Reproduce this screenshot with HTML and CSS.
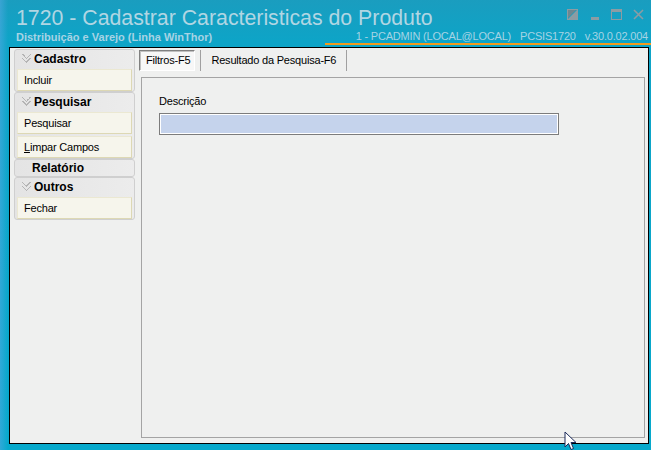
FILE: index.html
```html
<!DOCTYPE html>
<html lang="pt-BR">

<head>
  <meta charset="UTF-8">
  <title>1720 - Cadastrar Caracteristicas do Produto</title>
  <link rel="stylesheet" href="styles.css">
</head>

<body>
  <div class="desk">
    <div class="titlebar">
      <div class="title">1720 - Cadastrar Caracteristicas do Produto</div>
      <div class="controls">
        <svg width="11" height="11" viewBox="0 0 11 11"><rect x="0.5" y="0.5" width="10" height="10" fill="none" stroke="#8c9ca3"/><polygon points="0,11 11,0 11,11" fill="#8c9ca3"/><polygon points="1,1 9,1 1,9" fill="#6f8790"/></svg>
        <svg width="11" height="11" viewBox="0 0 11 11"><rect x="2" y="8" width="8" height="3" fill="#8c9ca3"/></svg>
        <svg width="11" height="11" viewBox="0 0 11 11"><rect x="0.5" y="0.5" width="10" height="10" fill="none" stroke="#8c9ca3"/><rect x="0" y="0" width="11" height="3" fill="#8c9ca3"/></svg>
        <svg width="11" height="11" viewBox="0 0 11 11"><path d="M1 1 L10 10 M10 1 L1 10" stroke="#8c9ca3" stroke-width="1.6"/></svg>
      </div>
    </div>
    <div class="subbar">
      <div class="subtitle">Distribuição e Varejo (Linha WinThor)</div>
      <div class="info">
        <span>1 - PCADMIN (LOCAL@LOCAL)</span>
        <span>PCSIS1720</span>
        <span>v.30.0.02.004</span>
      </div>
    </div>

    <div class="window">
      <div class="sidebar">
        <div class="group">
          <div class="group-head"><i class="chev"></i>Cadastro</div>
          <div class="item">Incluir</div>
        </div>
        <div class="group">
          <div class="group-head"><i class="chev"></i>Pesquisar</div>
          <div class="item">Pesquisar</div>
          <div class="item"><u>L</u>impar Campos</div>
        </div>
        <div class="group">
          <div class="group-head plain">Relatório</div>
        </div>
        <div class="group">
          <div class="group-head"><i class="chev"></i>Outros</div>
          <div class="item">Fechar</div>
        </div>
      </div>

      <div class="main">
        <div class="tabs">
          <div class="tab active">Filtros-F5</div>
          <div class="tab">Resultado da Pesquisa-F6</div>
        </div>
        <div class="panel">
          <div class="field-label">Descrição</div>
          <div class="field-input"></div>
        </div>
      </div>
    </div>
  </div>

  <svg class="cursor" width="14" height="20" viewBox="0 0 14 20">
    <path d="M1 1 L1 16 L4.5 12.5 L7 18.5 L9.5 17.5 L7 11.5 L12 11.5 Z" fill="#fff" stroke="#1a2a5a" stroke-width="1"/>
  </svg>
</body>

</html>
```

FILE: styles.css
```css
html,
body {
  margin: 0;
  width: 651px;
  height: 450px;
  overflow: hidden;
  font-family: "Liberation Sans", Arial, sans-serif;
  font-size: 11px;
  letter-spacing: -0.2px;
  color: #000;
}

.desk {
  width: 651px;
  height: 450px;
  background:
    linear-gradient(90deg, rgba(90, 170, 230, 0.5) 0, rgba(90, 170, 230, 0) 8px),
    linear-gradient(180deg, #1a9dbf 0, #0ea4c7 40px, #06a9cc 100%);
}

.titlebar {
  height: 31px;
  display: flex;
  justify-content: space-between;
}

.title {
  padding: 7px 0 0 16px;
  font-size: 21.3px;
  line-height: 22px;
  letter-spacing: 0;
  color: #b1d6e3;
}

.controls {
  display: flex;
  gap: 11px;
  padding: 9px 7px 0 0;
}

.subbar {
  height: 14px;
  display: flex;
  justify-content: space-between;
  align-items: flex-end;
}

.subtitle {
  padding-left: 16px;
  font-weight: bold;
  font-size: 11px;
  line-height: 13px;
  letter-spacing: 0;
  color: #a6d3e4;
  align-self: flex-start;
}

.info {
  width: 326px;
  height: 14px;
  display: flex;
  justify-content: flex-end;
  gap: 9px;
  padding-right: 3px;
  box-sizing: border-box;
  border-bottom: 2px solid #f39a1c;
  color: #a6d3e4;
  line-height: 11px;
  font-size: 11px;
}

.window {
  margin: 2px 0 0 9px;
  width: 640px;
  height: 397px;
  box-sizing: border-box;
  border: 1px solid #000;
  background: #eff0ef;
  display: flex;
  padding: 1px 3px 5px 4px;
}

.sidebar {
  width: 121px;
  flex-shrink: 0;
}

.group {
  border: 1px solid #cfcfcf;
  border-radius: 3px;
  background: linear-gradient(90deg, #e4e4e4, #ececec);
  padding: 0 2px;
}

.group-head {
  height: 17px;
  display: flex;
  align-items: center;
  font-weight: bold;
  font-size: 12px;
  letter-spacing: 0;
  padding-left: 5px;
}

.group-head.plain {
  height: 16px;
  padding-left: 15px;
}

.chev {
  width: 9px;
  height: 9px;
  margin-right: 3px;
  background:
    linear-gradient(45deg, transparent 45%, #b4b4b4 45%, #b4b4b4 60%, transparent 60%) 0 0 / 5px 5px no-repeat,
    linear-gradient(-45deg, transparent 45%, #b4b4b4 45%, #b4b4b4 60%, transparent 60%) 4px 0 / 5px 5px no-repeat,
    linear-gradient(45deg, transparent 45%, #b4b4b4 45%, #b4b4b4 60%, transparent 60%) 0 4px / 5px 5px no-repeat,
    linear-gradient(-45deg, transparent 45%, #b4b4b4 45%, #b4b4b4 60%, transparent 60%) 4px 4px / 5px 5px no-repeat;
}

.item {
  height: 22px;
  line-height: 21px;
  box-sizing: border-box;
  margin-top: 2px;
  padding-left: 6px;
  background: #f6f5ec;
  border: 1px solid #ddd8b4;
  border-left-color: #ebe8d2;
  border-top-color: #ebe8d2;
}

.main {
  flex: 1;
  display: flex;
  flex-direction: column;
  padding-left: 4px;
}

.tabs {
  height: 22px;
  display: flex;
  margin-bottom: 6px;
}

.tab {
  padding: 0 10px 0 6px;
  line-height: 20px;
  border-right: 1px solid #a0a0a0;
  margin-top: 1px;
}

.tab.active {
  background: #f7f7f7;
  border: 1px solid #fff;
  border-top-color: #808080;
  border-left-color: #808080;
  box-shadow: inset 1px 1px 0 #c0c0c0;
  padding: 0 4px 0 6px;
  margin-right: 5px;
  height: 19px;
  line-height: 19px;
}

.tab.active + .tab {
  border-left: 1px solid #a0a0a0;
  padding-left: 10px;
}

.panel {
  flex: 1;
  margin: 0 0 0 2px;
  border: 1px solid #a4a4a4;
  background: #eff0ef;
  padding: 17px 0 0 17px;
}

.field-label {
  height: 18px;
}

.field-input {
  width: 400px;
  height: 22px;
  box-sizing: border-box;
  border: 1px solid #7c7c7c;
  box-shadow: inset 0 0 0 1px #fff;
  background: #c5d3ec;
}

.cursor {
  position: absolute;
  left: 564px;
  top: 431px;
}
```
